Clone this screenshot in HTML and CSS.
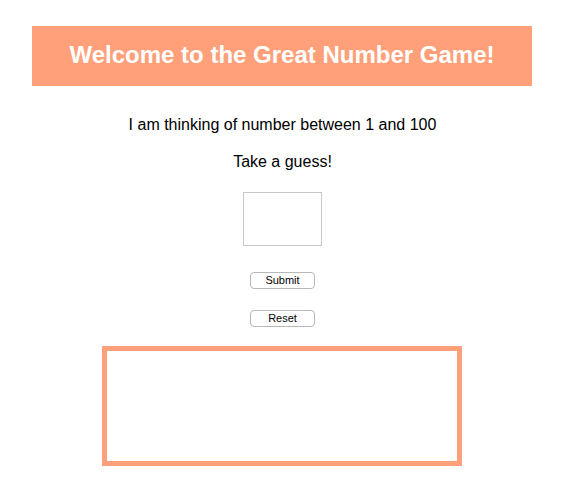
FILE: index.html
```html
<!DOCTYPE html>
<html>
<head>
<meta charset="utf-8">
<link rel="stylesheet" href="styles.css">
</head>
<body>
<div class="page">
  <h1 class="banner">Welcome to the Great Number Game!</h1>
  <p class="line first">I am thinking of number between 1 and 100</p>
  <p class="line second">Take a guess!</p>
  <input class="guess" type="text">
  <button class="btn submit">Submit</button>
  <button class="btn reset">Reset</button>
  <div class="result"></div>
</div>
</body>
</html>
```
FILE: styles.css
```css
html, body {
  margin: 0;
  padding: 0;
  background: #fff;
}
body {
  font-family: "Liberation Sans", Arial, sans-serif;
  color: #000;
}
.page {
  display: flex;
  flex-direction: column;
  align-items: center;
  padding-top: 26px;
}
.banner {
  width: 500px;
  height: 60px;
  margin: 0 1px 0 0;
  background: #ffa07a;
  color: #fff;
  font-size: 24px;
  font-weight: bold;
  line-height: 58px;
  text-align: center;
  letter-spacing: 0;
}
.line {
  margin: 0;
  font-size: 16px;
  line-height: 18px;
}
.first { margin-top: 30px; }
.second { margin-top: 19px; }
.guess {
  box-sizing: border-box;
  width: 79px;
  height: 54px;
  margin-top: 21px;
  border: 1px solid #c8c8c8;
  padding: 0;
  outline: none;
}
.btn {
  box-sizing: border-box;
  width: 65px;
  height: 17px;
  padding: 0;
  border: 1px solid #b8b8b8;
  border-radius: 4px;
  background: #fff;
  font-family: "Liberation Sans", Arial, sans-serif;
  font-size: 11px;
  line-height: 15px;
  color: #000;
}
.submit { margin-top: 26px; }
.reset { margin-top: 21px; }
.result {
  box-sizing: border-box;
  width: 360px;
  height: 120px;
  margin: 19px 1px 0 0;
  border: 5px solid #ffa07a;
}
```
